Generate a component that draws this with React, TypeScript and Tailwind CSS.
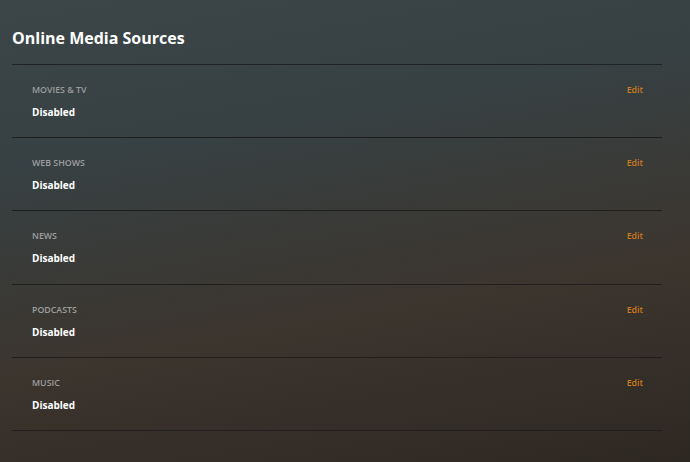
import React from "react";

const rows: { name: string; h: string }[] = [
  { name: "Movies & TV", h: "h-[73px]" },
  { name: "Web Shows", h: "h-[73px]" },
  { name: "News", h: "h-[74px]" },
  { name: "Podcasts", h: "h-[73px]" },
  { name: "Music", h: "h-[73px]" },
];

export default function App() {
  return (
    <div
      className="w-[690px] h-[462px] overflow-hidden bg-[linear-gradient(170deg,#3c4648_0%,#374042_30%,#3c352e_65%,#2e2823_100%)]"
      style={{ fontFamily: '"Open Sans", sans-serif' }}
    >
      <div className="pl-3 pt-[27px] pb-[14px]">
        <h1 className="text-[16px] leading-[23px] font-bold text-white">Online Media Sources</h1>
      </div>
      <div className="ml-3 mr-[28px] border-t border-[#1f2325]">
        {rows.map((r) => (
          <div key={r.name} className={`${r.h} border-b border-[#211f1d] pl-5 pr-[19px] pt-[18px] flex justify-between`}>
            <div>
              <div className="text-[8.8px] leading-[14px] font-semibold uppercase text-[#9c9e9e]">{r.name}</div>
              <div className="mt-[8px] text-[10px] leading-[14px] font-bold text-white">Disabled</div>
            </div>
            <div className="text-[8.8px] leading-[14px] font-semibold text-[#cc7b1d]">Edit</div>
          </div>
        ))}
      </div>
    </div>
  );
}
